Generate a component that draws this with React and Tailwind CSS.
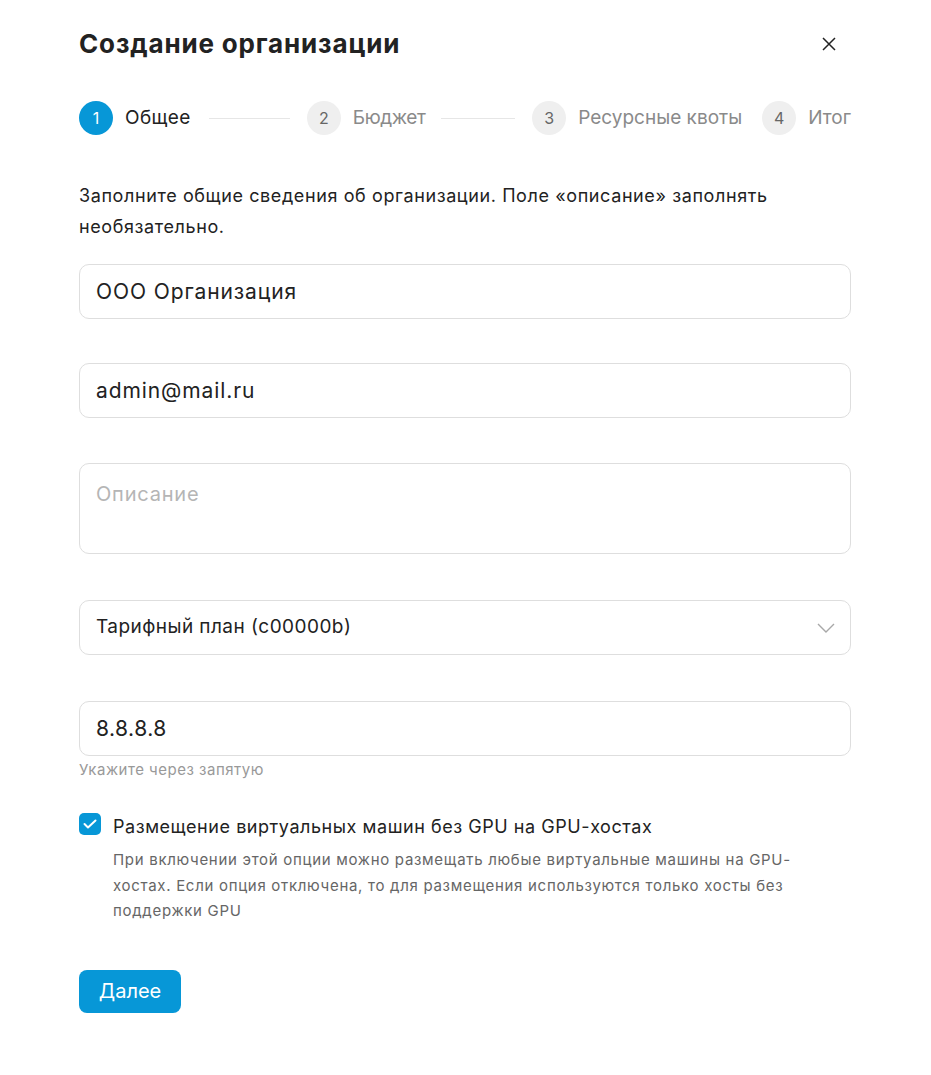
import React from "react";

const steps = [
  { n: 1, label: "Общее", active: true, track: "tracking-[0.4px]" },
  { n: 2, label: "Бюджет", track: "tracking-[-0.4px]" },
  { n: 3, label: "Ресурсные квоты", track: "" },
  { n: 4, label: "Итог", track: "" },
];

const Field = ({ children, className = "" }) => (
  <div className={"flex items-center rounded-[10px] border border-[#dedede] bg-white px-4 " + className}>
    {children}
  </div>
);

export default function App() {
  return (
    <div className="min-h-[1075px] w-[931px] bg-white font-['Inter','Noto_Sans',sans-serif] text-[#222]">
      <div className="pl-[79px] pr-[80px] pt-7 pb-10">
        {/* header */}
        <div className="flex items-center justify-between">
          <h1 className="text-[26px] font-bold leading-8 tracking-[0.85px] text-[#222]">Создание организации</h1>
          <svg className="mr-[14px]" width="16" height="16" viewBox="0 0 16 16" fill="none" stroke="#222" strokeWidth="1.5">
            <path d="M2 2l12 12M14 2L2 14" />
          </svg>
        </div>

        {/* stepper */}
        <div className="mt-[41px] flex items-center">
          {steps.map((s, i) => (
            <React.Fragment key={s.n}>
              <div className="flex items-center gap-3">
                <div
                  className={
                    "flex h-[34px] w-[34px] items-center justify-center rounded-full text-[16px] " +
                    (s.active ? "bg-[#0797d7] text-white" : "bg-[#efefef] text-[#666]")
                  }
                >
                  {s.n}
                </div>
                <span className={"whitespace-nowrap text-[19px] " + s.track + " " + (s.active ? "text-[#222]" : "text-[#8a8a8a]")}>
                  {s.label}
                </span>
              </div>
              {i === 0 && <div className="ml-[18px] mr-[17px] h-px flex-[1.1] bg-[#e6e6e6]" />}
              {i === 1 && <div className="ml-4 mr-[17px] h-px flex-1 bg-[#e6e6e6]" />}
              {i === 2 && <div className="w-5" />}
            </React.Fragment>
          ))}
        </div>

        <p className="mt-[45px] text-[18px] leading-[31px] tracking-[0.6px] text-[#222]">
          Заполните общие сведения об организации. Поле «описание» заполнять необязательно.
        </p>

        <Field className="mt-[22px] h-[55px]">
          <span className="text-[21px] tracking-[0.9px]">ООО Организация</span>
        </Field>

        <Field className="mt-[44px] h-[55px]">
          <span className="text-[21px] tracking-[0.9px]">admin@mail.ru</span>
        </Field>

        <div className="mt-[45px] h-[91px] rounded-[10px] border border-[#dedede] px-4 pt-[15px]">
          <span className="text-[20px] tracking-[0.8px] text-[#b5b5b5]">Описание</span>
        </div>

        <Field className="mt-[46px] h-[55px] justify-between">
          <span className="text-[19px] tracking-[0.45px]">Тарифный план (c00000b)</span>
          <svg className="mr-[-1px]" width="18" height="10" viewBox="0 0 18 10" fill="none" stroke="#a8a8a8" strokeWidth="1.4">
            <path d="M1 1l8 8 8-8" />
          </svg>
        </Field>

        <Field className="mt-[46px] h-[55px]">
          <span className="text-[21px] tracking-[0.5px]">8.8.8.8</span>
        </Field>
        <div className="mt-1 text-[15px] leading-5 tracking-[0.5px] text-[#999]">Укажите через запятую</div>

        {/* checkbox */}
        <div className="mt-[33px] flex gap-3">
          <div className="flex h-[22px] w-[22px] shrink-0 items-center justify-center rounded-[5px] bg-[#0797d7]">
            <svg width="14" height="10" viewBox="0 0 14 10" fill="none" stroke="white" strokeWidth="2" strokeLinecap="round" strokeLinejoin="round">
              <path d="M1.5 5l3.5 3.5L12.5 1.5" />
            </svg>
          </div>
          <div>
            <div className="text-[18px] leading-7 tracking-[0.55px] text-[#222]">Размещение виртуальных машин без GPU на GPU-хостах</div>
            <p className="mt-1.5 max-w-[700px] text-[15px] leading-[25.5px] tracking-[0.7px] text-[#666]">
              При включении этой опции можно размещать любые виртуальные машины на GPU-хостах. Если опция отключена, то для размещения используются только хосты без поддержки GPU
            </p>
          </div>
        </div>

        <button className="mt-[46px] h-[43px] w-[102px] rounded-lg bg-[#0797d7] text-[20px] text-white">
          Далее
        </button>
      </div>
    </div>
  );
}
